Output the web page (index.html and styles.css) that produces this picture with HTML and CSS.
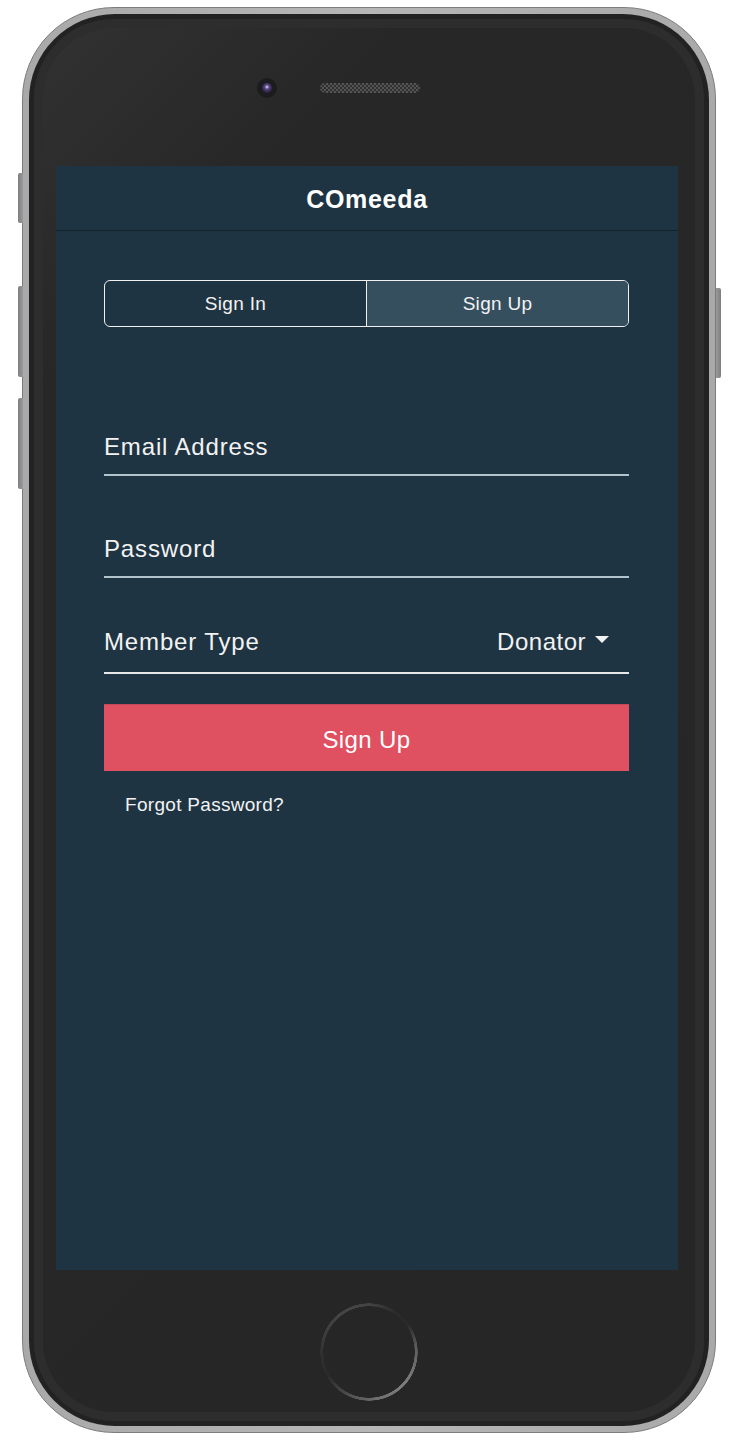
FILE: index.html
```html
<!DOCTYPE html>
<html lang="en">
<head>
<meta charset="utf-8">
<title>COmeeda</title>
<link rel="stylesheet" href="styles.css">
</head>
<body>
<div class="phone">
  <span class="side-btn btn-mute"></span>
  <span class="side-btn btn-vol-up"></span>
  <span class="side-btn btn-vol-down"></span>
  <span class="side-btn btn-power"></span>
  <div class="bezel">
    <div class="face">
      <div class="top-bar">
        <span class="camera"><span class="lens"></span></span>
        <span class="speaker"></span>
      </div>
      <div class="screen">
        <header class="app-header"><h1 class="app-title">COmeeda</h1></header>
        <main class="content">
          <div class="segmented">
            <div class="seg">Sign In</div>
            <div class="seg seg-active">Sign Up</div>
          </div>
          <div class="field field-email"><span class="field-label">Email Address</span></div>
          <div class="field field-password"><span class="field-label">Password</span></div>
          <div class="field field-member">
            <span class="field-label">Member Type</span>
            <span class="select-value">Donator<span class="caret"></span></span>
          </div>
          <div class="primary-btn">Sign Up</div>
          <div class="forgot">Forgot Password?</div>
        </main>
      </div>
      <div class="home-area"><div class="home-btn"></div></div>
    </div>
  </div>
</div>
</body>
</html>
```

FILE: styles.css
```css
* { box-sizing: border-box; }
html, body { margin: 0; padding: 0; background: #ffffff; }
body { font-family: "Liberation Sans", Arial, Helvetica, sans-serif; }

.phone {
  position: relative;
  margin: 7px 0 0 22px;
  width: 694px;
  height: 1426px;
  border-radius: 92px;
  border: 1px solid #7c7c7c;
  background: linear-gradient(90deg, #a9a9a9, #b6b6b6 50%, #a9a9a9);
  padding: 6px;
}

.side-btn {
  position: absolute;
  width: 5px;
  background: linear-gradient(90deg, #7e7e80, #9a9a9c);
  border-radius: 2px 0 0 2px;
}
.btn-mute { left: -5px; top: 165px; height: 50px; }
.btn-vol-up { left: -5px; top: 278px; height: 91px; }
.btn-vol-down { left: -5px; top: 390px; height: 91px; }
.btn-power { right: -6px; top: 280px; height: 90px; border-radius: 0 2px 2px 0; background: linear-gradient(90deg, #9a9a9c, #7e7e80); }

.bezel {
  height: 100%;
  border-radius: 86px;
  background: #222222;
  padding: 5px;
}

.face {
  height: 100%;
  border-radius: 80px;
  background: linear-gradient(135deg, #323232 0%, #272727 18%, #262626 100%);
  box-shadow: inset 0 0 0 9px #2d2d2d;
  padding: 0 26px 0 22px;
  display: flex;
  flex-direction: column;
}

.top-bar {
  height: 147px;
  display: flex;
  align-items: center;
  padding-bottom: 10px;
}
.camera {
  margin-left: 201px;
  width: 20px;
  height: 20px;
  border-radius: 50%;
  background: #1c1c1e;
  display: flex;
  align-items: center;
  justify-content: center;
}
.lens {
  width: 10px;
  height: 10px;
  border-radius: 50%;
  background: radial-gradient(circle at 50% 40%, #b8a9d8 0 1px, #5a4a86 2px, #2e2547 5px);
}
.speaker {
  margin-left: 43px;
  width: 100px;
  height: 10px;
  border-radius: 5px;
  background: repeating-conic-gradient(#5a5a5a 0 25%, #303030 0 50%) 0 0 / 4px 4px;
  opacity: 0.9;
}

.screen {
  width: 622px;
  height: 1104px;
  background: #1f3442;
  color: #f4f4f4;
  display: flex;
  flex-direction: column;
}

.app-header {
  height: 65px;
  border-bottom: 1px solid #13242f;
  display: flex;
  align-items: center;
  justify-content: center;
}
.app-title {
  margin: 0;
  font-size: 25px;
  font-weight: 700;
  letter-spacing: 0.7px;
  color: #ffffff;
  padding-top: 2px;
}

.content {
  padding: 49px 49px 0 48px;
}

.segmented {
  display: flex;
  height: 47px;
  border: 1.5px solid #f0f0f0;
  border-radius: 6px;
  overflow: hidden;
}
.seg {
  flex: 1;
  display: flex;
  align-items: center;
  justify-content: center;
  font-size: 19px;
  letter-spacing: 0.3px;
  color: #f2f2f2;
}
.seg-active {
  background: #364f5f;
  border-left: 1.5px solid #f0f0f0;
}

.field {
  display: flex;
  justify-content: space-between;
  align-items: baseline;
  font-size: 24px;
  line-height: 28px;
  letter-spacing: 0.85px;
  color: #f2f2f2;
}
.field-email {
  margin-top: 106px;
  padding-bottom: 13px;
  border-bottom: 2px solid #b3c3cb;
}
.field-password {
  margin-top: 59px;
  padding-bottom: 13px;
  border-bottom: 2px solid #b3c3cb;
}
.field-member {
  margin-top: 50px;
  padding-bottom: 16px;
  border-bottom: 2px solid #e8e8e8;
}
.select-value {
  display: flex;
  align-items: center;
  padding-right: 20px;
  letter-spacing: 0.5px;
}
.caret {
  margin-left: 9px;
  width: 0;
  height: 0;
  border-left: 7px solid transparent;
  border-right: 7px solid transparent;
  border-top: 7px solid #f2f2f2;
  position: relative;
  top: -3px;
}

.primary-btn {
  margin-top: 30px;
  height: 67px;
  background: #df5061;
  border-top: 1px solid #c7475a;
  display: flex;
  align-items: center;
  justify-content: center;
  font-size: 24px;
  letter-spacing: 0.4px;
  color: #ffffff;
  padding-top: 3px;
}

.forgot {
  margin-top: 23px;
  padding-left: 21px;
  font-size: 19px;
  line-height: 22px;
  letter-spacing: 0.3px;
  color: #f2f2f2;
}

.home-area {
  display: flex;
  justify-content: center;
  margin: 33px -26px 0 -22px;
}
.home-btn {
  width: 98px;
  height: 98px;
  border-radius: 50%;
  background: conic-gradient(from 0deg,
    #444444 0deg, #2a2a2a 35deg, #2a2a2a 55deg, #5e5e5e 85deg,
    #7d7d7d 130deg, #707070 170deg, #505050 205deg, #2a2a2a 240deg,
    #2f2f2f 265deg, #3a3a3a 285deg, #454545 320deg, #444444 360deg);
  -webkit-mask: radial-gradient(circle, transparent 45.5px, #000 46px, #000 48.5px, transparent 49px);
  mask: radial-gradient(circle, transparent 45.5px, #000 46px, #000 48.5px, transparent 49px);
}
```
